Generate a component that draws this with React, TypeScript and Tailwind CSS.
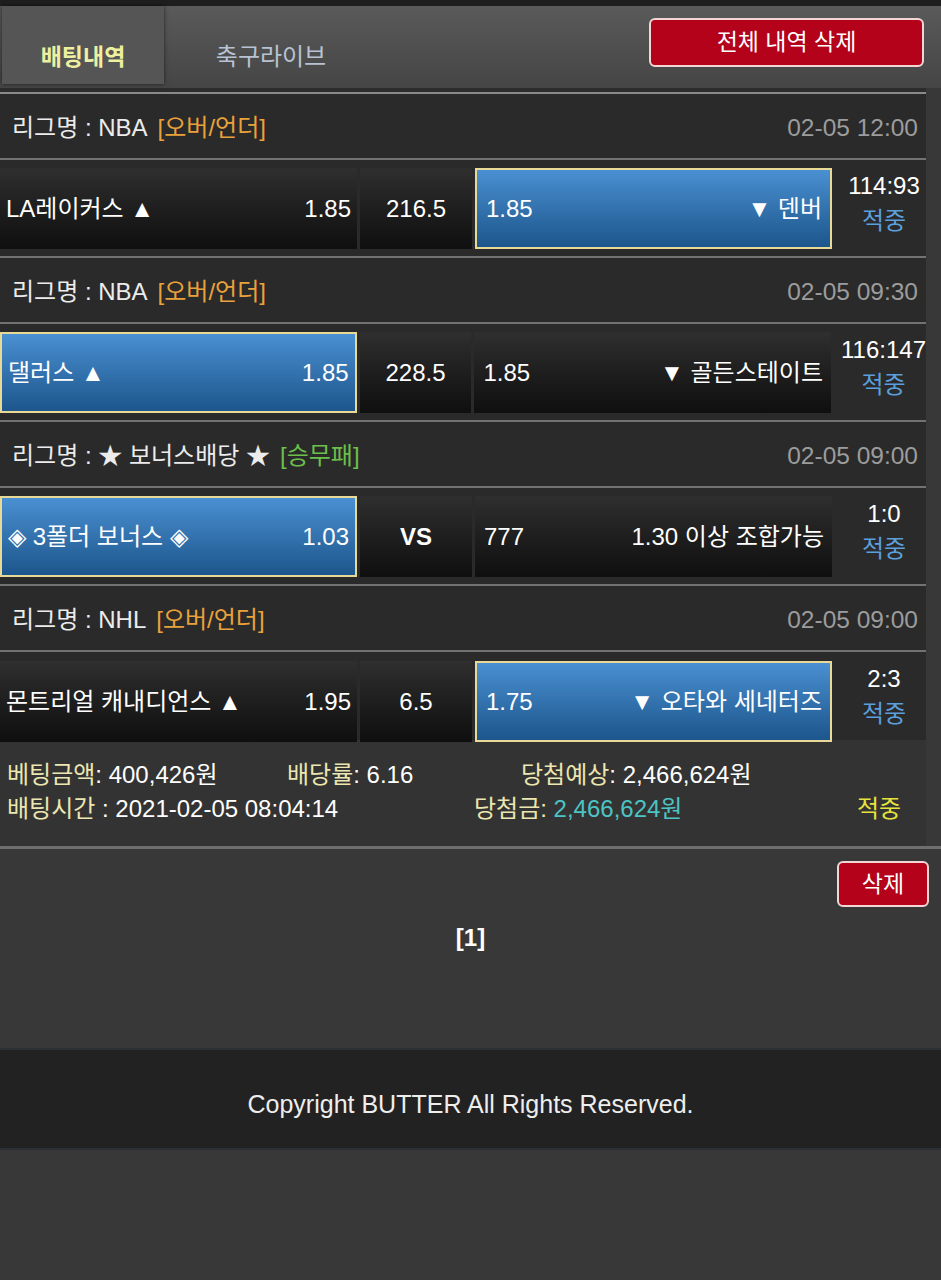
import React from 'react'

type Side = { label: string; odds: string; on?: boolean }
type Game = {
  league: string
  tag: string
  tagColor: string
  time: string
  home: Side
  mid: string
  midBold?: boolean
  away: Side
  score: string
}

const GAMES: Game[] = [
  {
    league: '리그명 : NBA',
    tag: '[오버/언더]',
    tagColor: 'text-[#e9a23b]',
    time: '02-05 12:00',
    home: { label: 'LA레이커스 ▲', odds: '1.85' },
    mid: '216.5',
    away: { label: '▼ 덴버', odds: '1.85', on: true },
    score: '114:93',
  },
  {
    league: '리그명 : NBA',
    tag: '[오버/언더]',
    tagColor: 'text-[#e9a23b]',
    time: '02-05 09:30',
    home: { label: '댈러스 ▲', odds: '1.85', on: true },
    mid: '228.5',
    away: { label: '▼ 골든스테이트', odds: '1.85' },
    score: '116:147',
  },
  {
    league: '리그명 : ★ 보너스배당 ★',
    tag: '[승무패]',
    tagColor: 'text-[#6cc04a]',
    time: '02-05 09:00',
    home: { label: '◈ 3폴더 보너스 ◈', odds: '1.03', on: true },
    mid: 'VS',
    midBold: true,
    away: { label: '1.30 이상 조합가능', odds: '777' },
    score: '1:0',
  },
  {
    league: '리그명 : NHL',
    tag: '[오버/언더]',
    tagColor: 'text-[#e9a23b]',
    time: '02-05 09:00',
    home: { label: '몬트리얼 캐내디언스 ▲', odds: '1.95' },
    mid: '6.5',
    away: { label: '▼ 오타와 세네터즈', odds: '1.75', on: true },
    score: '2:3',
  },
]

const cellBase = 'h-[81px] flex items-center text-[24px] text-white'
const darkCell = 'bg-gradient-to-b from-[#2f2f2f] to-[#0f0f0f]'
const blueCell = 'bg-gradient-to-b from-[#4a90d2] to-[#1c568c] border-2 border-[#e8da96]'

function GameBlock({ g, last }: { g: Game; last: boolean }) {
  return (
    <div>
      <div className="h-[66px] flex items-center justify-between pl-3 pr-2 pt-[4px] bg-[#2a2a2a] border-b-2 border-[#727272]">
        <div className="text-[24px] text-[#ececec] flex gap-[10px]">
          <span>{g.league}</span>
          <span className={g.tagColor}>{g.tag}</span>
        </div>
        <div className="text-[24.5px] text-[#9c9c9c]">{g.time}</div>
      </div>
      <div
        className={`flex items-start bg-[#2a2a2a] ${
          last ? 'h-[88px] pt-[9px]' : 'h-[98px] pt-[8px] border-b-2 border-[#727272]'
        }`}
      >
        <div className={`${cellBase} w-[357px] justify-between pl-[6px] pr-[6px] ${g.home.on ? blueCell : darkCell}`}>
          <span>{g.home.label}</span>
          <span>{g.home.odds}</span>
        </div>
        <div className={`${cellBase} w-[112px] ml-[3px] justify-center ${darkCell} ${g.midBold ? 'font-bold' : ''}`}>
          {g.mid}
        </div>
        <div className={`${cellBase} w-[357px] ml-[3px] justify-between pl-[9px] pr-[8px] ${g.away.on ? blueCell : darkCell}`}>
          <span>{g.away.odds}</span>
          <span>{g.away.label}</span>
        </div>
        <div className="flex-1 flex flex-col items-center pl-[10px] text-[24px] leading-[35px]">
          <span className="text-white">{g.score}</span>
          <span className="text-[#5b9fdc]">적중</span>
        </div>
      </div>
    </div>
  )
}

export default function App() {
  return (
    <div
      className="min-h-[1280px] bg-[#383838]"
      style={{ fontFamily: '"Liberation Sans", "Noto Sans CJK KR", sans-serif' }}
    >
      <div className="h-[6px] bg-[#1e1e1e]" />
      {/* tabs */}
      <div className="h-[82px] bg-gradient-to-b from-[#5a5a5a] to-[#454545] flex items-start">
        <div className="w-[162px] h-[78px] ml-[2px] bg-[#555555] shadow-[0_0_4px_rgba(0,0,0,0.6)] flex items-center justify-center pt-[24px]">
          <span className="text-[23px] font-bold text-[#eef0a0]">배팅내역</span>
        </div>
        <div className="w-[214px] h-[78px] flex items-center justify-center pt-[24px]">
          <span className="text-[24px] text-[#b7c3d2]">축구라이브</span>
        </div>
        <div className="flex-1 flex justify-end pr-[17px] pt-[12px]">
          <button className="w-[275px] h-[49px] rounded-[6px] bg-[#b3021a] border-2 border-[#f2d6d6] text-white text-[23px]">
            전체 내역 삭제
          </button>
        </div>
      </div>
      <div className="w-[926px] h-[6px] bg-[#2c2c2c] border-b-2 border-[#8a8a8a]" />

      <div className="w-[926px]">
        {GAMES.map((g, i) => (
          <GameBlock key={i} g={g} last={i === GAMES.length - 1} />
        ))}
        {/* summary */}
        <div className="h-[106px] bg-[#333333] pl-[7px] pt-[18px] text-[24px] leading-[34px]">
          <div className="flex">
            <span className="w-[280px]">
              <span className="text-[#ece6b0]">베팅금액</span>
              <span className="text-white">: 400,426원</span>
            </span>
            <span className="w-[234px]">
              <span className="text-[#ece6b0]">배당률</span>
              <span className="text-white">: 6.16</span>
            </span>
            <span>
              <span className="text-[#ece6b0]">당첨예상</span>
              <span className="text-white">: 2,466,624원</span>
            </span>
          </div>
          <div className="flex">
            <span className="w-[467px]">
              <span className="text-[#ece6b0]">배팅시간</span>
              <span className="text-white"> : 2021-02-05 08:04:14</span>
            </span>
            <span className="w-[383px]">
              <span className="text-[#ece6b0]">당첨금: </span>
              <span className="text-[#4cc4c4]">2,466,624원</span>
            </span>
            <span className="text-[#e6e43c]">적중</span>
          </div>
        </div>
      </div>
      <div className="h-[3px] bg-[#6e6e6e]" />

      <div className="h-[199px]">
        <div className="flex justify-end pr-[12px] pt-[12px]">
          <button className="w-[92px] h-[46px] rounded-[6px] bg-[#b3021a] border-2 border-[#f2d6d6] text-white text-[23px]">
            삭제
          </button>
        </div>
        <div className="text-center text-white font-bold text-[24px] mt-[13px]">[1]</div>
      </div>

      <footer className="h-[102px] pt-[12px] bg-[#222222] border-t-2 border-[#2b3036] border-b-2 flex items-center justify-center">
        <span className="text-[25px] text-[#eeeeee]">Copyright BUTTER All Rights Reserved.</span>
      </footer>
    </div>
  )
}
